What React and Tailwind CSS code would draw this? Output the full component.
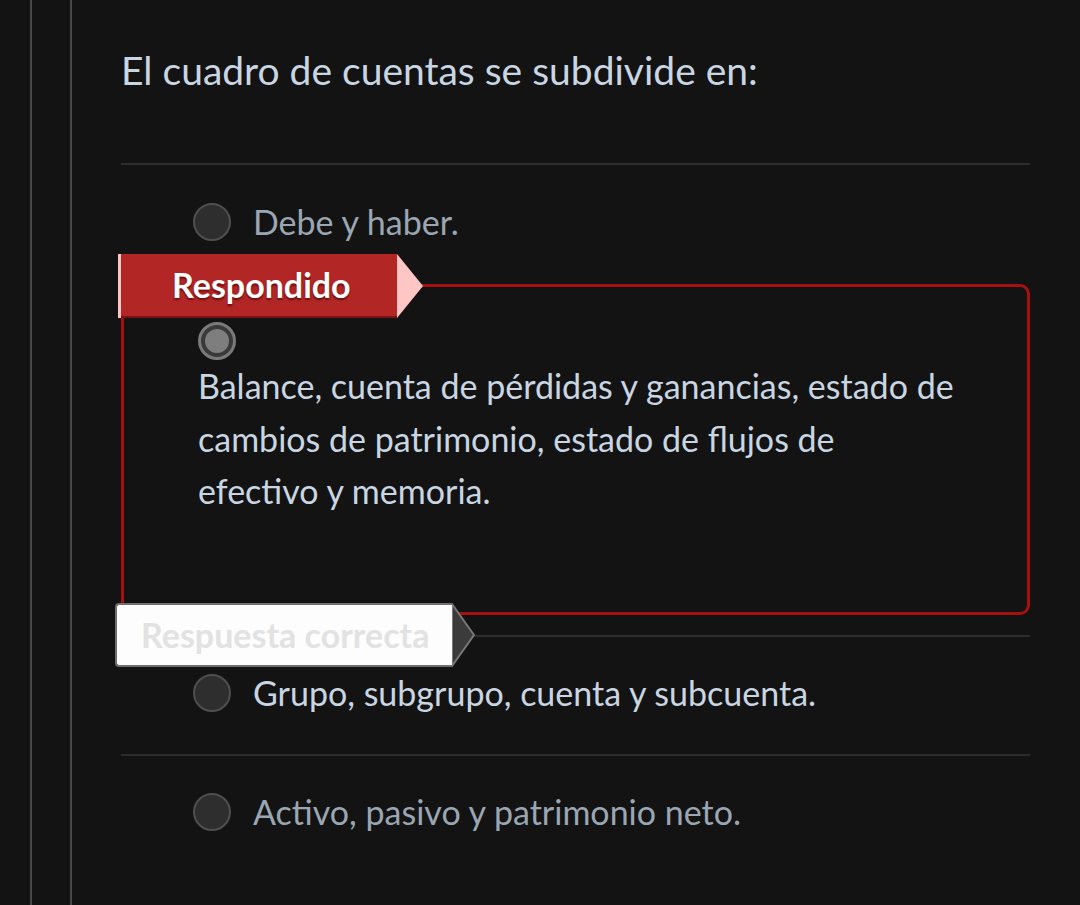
import React from 'react';

const font = { fontFamily: 'Lato, "Noto Sans", sans-serif' };

// Plain radio bubble used by the unanswered options
const Radio = ({ selected }) =>
    selected ? (
        <div className="w-[38px] h-[38px] rounded-full border-[3px] border-[#7a7a7a] bg-[#3a3a3a] flex items-center justify-center">
            <div className="w-[24px] h-[24px] rounded-full bg-[#7e7e7e]" />
        </div>
    ) : (
        <div className="w-[38px] h-[38px] rounded-full border-2 border-[#4f4f4f] bg-[#2e2e2e]" />
    );

const Option = ({ text, muted, tall }) => (
    <div className={`flex items-center gap-[22px] pl-[72px] ${tall ? 'h-[119px] pb-[6px]' : 'h-[117px] pb-[4px]'}`}>
        <Radio />
        <span className={`text-[34px] leading-[40px] ${muted ? 'text-[#9aa6b2]' : 'text-[#c9d6e2]'}`}>
            {text}
        </span>
    </div>
);

const Divider = () => <div className="h-[2px] bg-[#2c2c2c]" />;

const App = () => {
    return (
        <div className="min-h-[905px] bg-[#131313] flex" style={font}>
            {/* Left gutter lines */}
            <div className="w-[30px] shrink-0" />
            <div className="w-[42px] shrink-0 border-l-2 border-r-2 border-[#474747]" />

            {/* Question */}
            <div className="pl-[49px] w-[958px] pt-[43px]">
                <h1 className="text-[39px] leading-[54px] text-[#c9d6e2]">
                    El cuadro de cuentas se subdivide en:
                </h1>

                <div className="mt-[66px]">
                    <Divider />
                    <Option text="Debe y haber." muted tall />

                    {/* Answered option */}
                    <div className="relative border-[3px] border-[#a80f0f] rounded-[10px] pl-[74px] pt-[35px] pb-[94px]">
                        <div className="absolute -left-[6px] -top-[33px] flex h-[64px]">
                            <div className="w-[3px] bg-[#ffc6c6]" />
                            <div className="w-[276px] bg-[#b32626] border-b-2 border-[#7d1111] flex items-center pl-[51px]">
                                <span
                                    className="text-white font-bold text-[34px] leading-none"
                                    style={{ textShadow: '0 2px 2px #6a0e0e' }}
                                >
                                    Respondido
                                </span>
                            </div>
                            <svg width="27" height="64" viewBox="0 0 27 64" className="block">
                                <polygon points="0,0 26,32 0,64" fill="#ffc6c6" />
                            </svg>
                        </div>

                        <Radio selected />
                        <p className="w-[764px] text-[34px] leading-[52.5px] text-[#c9d6e2]">
                            Balance, cuenta de pérdidas y ganancias, estado de cambios de patrimonio, estado de flujos de efectivo y memoria.
                        </p>

                        <div className="absolute -left-[9px] top-[316px] flex h-[64px] z-10">
                            <div className="w-[337px] bg-[#fdfdfd] border-2 border-r-0 border-[#6f6f6f] rounded-l-[4px] flex items-center pl-[24px]">
                                <span className="text-[#e2e2e2] font-bold text-[34px] leading-none">
                                    Respuesta correcta
                                </span>
                            </div>
                            <svg width="24" height="64" viewBox="0 0 24 64" className="block">
                                <polygon points="0,1 22,32 0,63" fill="#3b3b3b" stroke="#777" strokeWidth="2" />
                            </svg>
                        </div>
                    </div>

                    <div className="mt-[20px]">
                        <Divider />
                    </div>
                    <Option text="Grupo, subgrupo, cuenta y subcuenta." />
                    <Divider />
                    <Option text="Activo, pasivo y patrimonio neto." muted />
                </div>
            </div>
        </div>
    );
};

export default App;
